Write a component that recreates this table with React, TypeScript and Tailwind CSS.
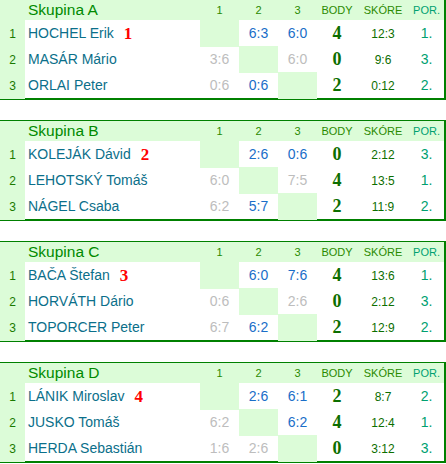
type Cell = { s: string; blue: boolean } | null

interface Player {
  name: string
  seed?: number
  games: Cell[]
  body: number
  score: string
  por: string
}

interface Group {
  title: string
  players: Player[]
}

const b = (s: string) => ({ s, blue: true })
const g = (s: string) => ({ s, blue: false })

const groups: Group[] = [
  {
    title: "Skupina A",
    players: [
      { name: "HOCHEL Erik", seed: 1, games: [null, b("6:3"), b("6:0")], body: 4, score: "12:3", por: "1." },
      { name: "MASÁR Mário", games: [g("3:6"), null, g("6:0")], body: 0, score: "9:6", por: "3." },
      { name: "ORLAI Peter", games: [g("0:6"), b("0:6"), null], body: 2, score: "0:12", por: "2." },
    ],
  },
  {
    title: "Skupina B",
    players: [
      { name: "KOLEJÁK Dávid", seed: 2, games: [null, b("2:6"), b("0:6")], body: 0, score: "2:12", por: "3." },
      { name: "LEHOTSKÝ Tomáš", games: [g("6:0"), null, g("7:5")], body: 4, score: "13:5", por: "1." },
      { name: "NÁGEL Csaba", games: [g("6:2"), b("5:7"), null], body: 2, score: "11:9", por: "2." },
    ],
  },
  {
    title: "Skupina C",
    players: [
      { name: "BAČA Štefan", seed: 3, games: [null, b("6:0"), b("7:6")], body: 4, score: "13:6", por: "1." },
      { name: "HORVÁTH Dário", games: [g("0:6"), null, g("2:6")], body: 0, score: "2:12", por: "3." },
      { name: "TOPORCER Peter", games: [g("6:7"), b("6:2"), null], body: 2, score: "12:9", por: "2." },
    ],
  },
  {
    title: "Skupina D",
    players: [
      { name: "LÁNIK Miroslav", seed: 4, games: [null, b("2:6"), b("6:1")], body: 2, score: "8:7", por: "2." },
      { name: "JUSKO Tomáš", games: [g("6:2"), null, b("6:2")], body: 4, score: "12:4", por: "1." },
      { name: "HERDA Sebastián", games: [g("1:6"), g("2:6"), null], body: 0, score: "3:12", por: "3." },
    ],
  },
]

const cols = "grid grid-cols-[25px_175px_39px_39px_39px_40px_52px_1fr]"

function GroupTable({ group }: { group: Group }) {
  return (
    <div className="border-t border-r-2 border-b-2 border-[#008000]">
      {/* Header */}
      <div className={`${cols} h-[20px] bg-[#dcfcd8] items-center`}>
        <div></div>
        <div className="pl-[3px] text-[15.5px] text-[#008a00] leading-none">{group.title}</div>
        <div className="text-center text-[11px] text-[#2a8a00]">1</div>
        <div className="text-center text-[11px] text-[#2a8a00]">2</div>
        <div className="text-center text-[11px] text-[#2a8a00]">3</div>
        <div className="text-center text-[11px] text-[#2a8a00]">BODY</div>
        <div className="text-center text-[11px] text-[#2a8a00]">SKÓRE</div>
        <div className="text-center text-[11px] text-[#00a070]">POR.</div>
      </div>

      {/* Players */}
      {group.players.map((p, i) => (
        <div key={p.name} className={`${cols} h-[26px] items-stretch`}>
          <div className="bg-[#dcfcd8] flex items-center justify-center text-[12px] text-[#1a7a00]">{i + 1}</div>
          <div className="flex items-center pl-[3px] text-[14px] text-[#0b6f8a]">
            {p.name}
            {p.seed && (
              <span className="ml-[10px] text-[17px] font-bold text-[#ff0000] font-['Liberation_Serif',serif] leading-none">
                {p.seed}
              </span>
            )}
          </div>
          {p.games.map((c, j) =>
            c === null ? (
              <div key={j} className="bg-[#dcfcd8]"></div>
            ) : (
              <div
                key={j}
                className={`flex items-center justify-center text-[14px] ${c.blue ? "text-[#1a6ec8]" : "text-[#bdbdbd]"}`}
              >
                {c.s}
              </div>
            )
          )}
          <div className="flex items-center justify-center text-[18px] font-bold text-[#0c6e00] font-['Liberation_Serif',serif]">
            {p.body}
          </div>
          <div className="flex items-center justify-center text-[12px] text-[#0c6e00]">{p.score}</div>
          <div className="flex items-center justify-center text-[14px] text-[#00a070]">{p.por}</div>
        </div>
      ))}
    </div>
  )
}

export default function App() {
  return (
    <div className="w-[446px] h-[464px] overflow-hidden bg-white font-['Liberation_Sans',Arial,sans-serif]">
      <div className="-mt-px flex flex-col gap-[20px]">
        {groups.map((gr) => (
          <GroupTable key={gr.title} group={gr} />
        ))}
      </div>
    </div>
  )
}
